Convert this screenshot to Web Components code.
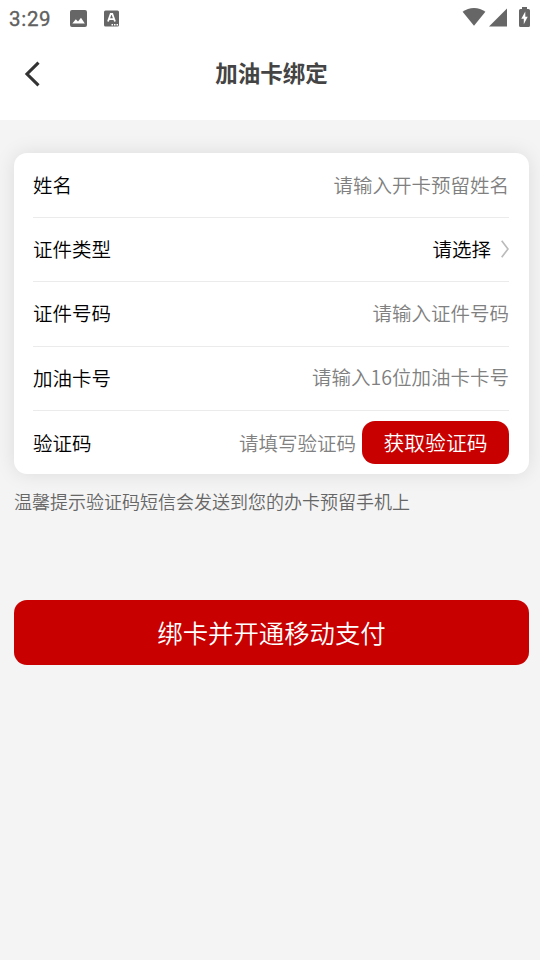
<!DOCTYPE html>
<html lang="zh-CN">
<head>
<meta charset="utf-8">
<title>加油卡绑定</title>
<style>
  html, body { margin: 0; height: 100%; background: #f4f4f4; overflow: hidden; }
  body { font-family: "Noto Sans CJK SC", sans-serif; font-weight: 350; color: #000; }
</style>
</head>
<body>
<bind-page></bind-page>
<script>
const define = (name, html) => customElements.define(name, class extends HTMLElement {
  constructor() {
    super();
    this.attachShadow({ mode: 'open' }).innerHTML = html;
  }
});

define('status-bar', `
<style>
  :host { display: flex; align-items: center; height: 36px; box-sizing: border-box; padding: 0 9px; color: #666; }
  .time { font: 400 20.5px/36px Roboto, sans-serif; letter-spacing: .7px; width: 60px; padding-top: 2px; color: #606060; -webkit-text-stroke: .35px #606060; }
  svg { display: block; fill: #666; flex: none; }
  .right { display: flex; margin-left: auto; padding-bottom: 2px; }
</style>
<span class="time">3:29</span>
<svg width="19" height="19" viewBox="0 0 19 19"><path fill-rule="evenodd" d="M3 1H16Q18 1 18 3V16Q18 18 16 18H3Q1 18 1 16V3Q1 1 3 1ZM3.300 14.500H15.800L12 8.700L9 12.600L6.800 10.200Z"/></svg>
<svg width="17" height="19" viewBox="0 0 17 19" style="margin-left:15px"><rect x="1" y="1.500" width="15" height="16" rx="1.500"/><path d="M5 12.500L7.700 5H9.300L12 12.500M6 10.200H11" fill="none" stroke="#fff" stroke-width="1.800"/><path d="M8.500 15h1.500v1.400H8.500zM11 15h1.500v1.400H11zM13.500 15H15v1.400h-1.500z" fill="#fff"/></svg>
<span class="right">
<svg width="24" height="20" viewBox="0 0 24 20"><path d="M.600 4.800C7-.400 17-.400 23.400 4.800L12 18.800Z"/></svg>
<svg width="19" height="20" viewBox="0 0 19 20" style="margin-left:3px"><path d="M18 1.500V19.500H0Z"/></svg>
<svg width="11" height="20" viewBox="0 0 11 20" style="margin-left:11px;margin-right:1px"><path fill-rule="evenodd" d="M3 0H8V2H9.500Q11 2 11 3.500V18.500Q11 20 9.500 20H1.500Q0 20 0 18.500V3.500Q0 2 1.500 2H3ZM6.300 4.500L2.300 11.700H4.800V17.300L8.700 9.700H6.300Z"/></svg>
</span>
`);

define('nav-bar', `
<style>
  :host { display: grid; grid-template-columns: 60px 1fr 60px; align-items: center; height: 84px; box-sizing: border-box; padding: 0 0 9px 0; }
  svg { display: block; margin-left: 24px; }
  h1 { margin: 0; text-align: center; font-size: 22.500px; line-height: 34px; font-weight: 700; color: #444; padding: 0 0 1px 3px; margin-top: -2px; }
</style>
<svg width="17" height="26" viewBox="0 0 17 26"><path d="M14.500 1.700L3 13L14.500 24.300" fill="none" stroke="#333" stroke-width="3.100"/></svg>
<h1><slot></slot></h1>
`);

define('form-card', `
<style>
  :host { display: grid; grid-template-rows: 65px 64px 65px 64px 63px; height: 321px; box-sizing: border-box; padding: 0 20px 0 19px; background: #fff; border-radius: 13px; box-shadow: 0 0 20px rgba(0,0,0,.1); }
</style>
<slot></slot>
`);

define('form-row', `
<style>
  :host { display: flex; align-items: center; justify-content: space-between; box-sizing: border-box; border-bottom: 1px solid #ebebeb; font-size: 19.500px; line-height: 28px; }
  :host(:first-child) { padding-bottom: 1px; }
  :host(:nth-child(2)) { padding-bottom: 2px; }
  :host(:nth-child(3)) { padding-bottom: 3px; }
  :host(:nth-child(4)) { padding-bottom: 1px; }
  :host(:nth-child(4)) .value { padding-bottom: 2px; }
  :host(:last-child) { border-bottom: 0; }
  .value { display: flex; align-items: center; color: #808080; }
</style>
<slot name="label"></slot>
<span class="value"><slot></slot></span>
`);

define('select-value', `
<style>
  :host { display: flex; align-items: center; color: #000; }
  svg { display: block; margin-left: 10px; }
</style>
<slot></slot>
<svg width="8" height="18" viewBox="0 0 8 18"><path d="M.700 .800L7 9L.700 17.200" fill="none" stroke="#bbb" stroke-width="1.700"/></svg>
`);

define('red-button', `
<style>
  :host { display: flex; align-items: center; justify-content: center; box-sizing: border-box; background: #c80000; color: #fff; border-radius: 13px; height: 65px; padding-bottom: 2px; font-size: 25.400px; line-height: 36px; }
  :host([small]) { width: 147px; height: 43px; padding-bottom: 1px; font-size: 20.800px; margin-left: 6px; }
</style>
<slot></slot>
`);

define('bind-page', `
<style>
  :host { display: flex; flex-direction: column; height: 960px; width: 540px; }
  header { background: #fff; height: 120px; flex: none; }
  main { padding: 33px 11px 0 14px; }
  p { margin: 14px 0 0; font-size: 18px; line-height: 26px; color: #666; }
  .submit { margin-top: 86px; }
</style>
<header><status-bar></status-bar><nav-bar>加油卡绑定</nav-bar></header>
<main>
  <form-card>
    <form-row><span slot="label">姓名</span>请输入开卡预留姓名</form-row>
    <form-row><span slot="label">证件类型</span><select-value>请选择</select-value></form-row>
    <form-row><span slot="label">证件号码</span>请输入证件号码</form-row>
    <form-row><span slot="label">加油卡号</span>请输入16位加油卡卡号</form-row>
    <form-row><span slot="label">验证码</span>请填写验证码<red-button small>获取验证码</red-button></form-row>
  </form-card>
  <p>温馨提示验证码短信会发送到您的办卡预留手机上</p>
  <red-button class="submit">绑卡并开通移动支付</red-button>
</main>
`);
</script>
</body>
</html>
